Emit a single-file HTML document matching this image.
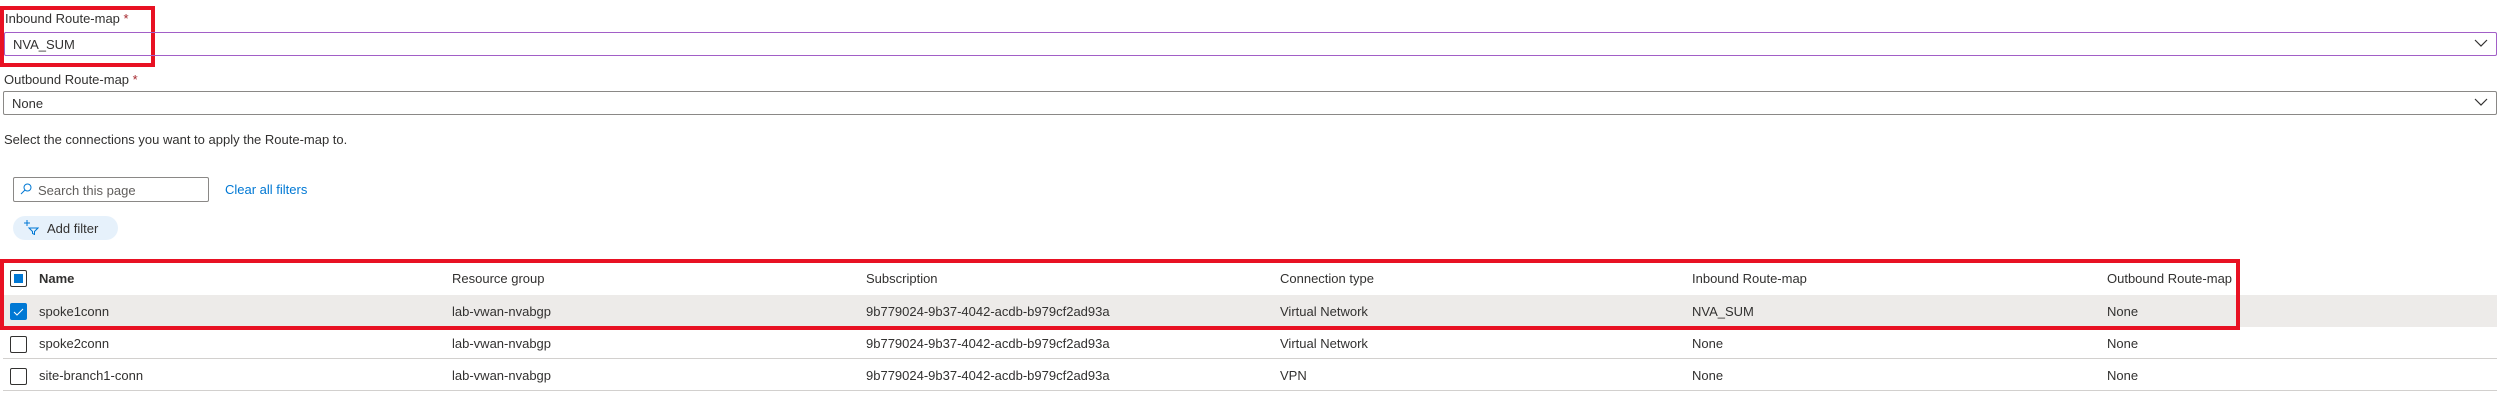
<!DOCTYPE html>
<html><head><style>
*{box-sizing:border-box;margin:0;padding:0}
body{width:2507px;height:402px;background:#fff;font-family:"Liberation Sans",sans-serif;font-size:13px;color:#323130;position:relative;overflow:hidden}
.a{position:absolute;white-space:nowrap}
.sel{position:absolute;left:3px;width:2494px;height:24px;border:1px solid #8a8886;border-radius:2px}
.sel span{position:absolute;left:8px;top:4px}
.chev{position:absolute;right:8px;top:6px}
.red{position:absolute;border:4px solid #e81123}
.cb{position:absolute;left:10px;width:17px;height:17px;border:1px solid #323130;border-radius:2px;background:#fff}
.sep{position:absolute;left:3px;width:2494px;height:1px;background:#d2d0ce}
</style></head><body>
<div class="red" style="left:0;top:6px;width:155px;height:61px"></div>
<div class="a" style="left:5px;top:11px">Inbound Route-map <span style="color:#a4262c">*</span></div>
<div class="sel" style="top:32px;border-color:#a25fc7;left:4px;width:2493px"><span>NVA_SUM</span><svg class="chev" width="14" height="9" viewBox="0 0 14 9"><path d="M1 1l6 6 6-6" fill="none" stroke="#323130" stroke-width="1.2"/></svg></div>
<div class="a" style="left:4px;top:72px">Outbound Route-map <span style="color:#a4262c">*</span></div>
<div class="sel" style="top:91px"><span>None</span><svg class="chev" width="14" height="9" viewBox="0 0 14 9"><path d="M1 1l6 6 6-6" fill="none" stroke="#323130" stroke-width="1.2"/></svg></div>
<div class="a" style="left:4px;top:132px">Select the connections you want to apply the Route-map to.</div>
<div class="a" style="left:13px;top:177px;width:196px;height:25px;border:1px solid #8a8886;border-radius:2px"><svg style="position:absolute;left:6px;top:5px" width="12" height="12" viewBox="0 0 12 12"><circle cx="7.5" cy="4.5" r="3.5" fill="none" stroke="#0078d4"/><path d="M5 7l-4 4" stroke="#0078d4"/></svg><span style="position:absolute;left:24px;top:5px;color:#605e5c">Search this page</span></div>
<div class="a" style="left:225px;top:182px;color:#0078d4">Clear all filters</div>
<div class="a" style="left:13px;top:216px;width:105px;height:24px;border-radius:12px;background:#e6f1fb"><svg style="position:absolute;left:10px;top:3px" width="16" height="16" viewBox="0 0 16 16"><path d="M4 1v6M1 4h6" stroke="#0078d4"/><path d="M6 9h9l-3.5 3.5v3l-2-1v-2z" fill="none" stroke="#0078d4"/></svg><span style="position:absolute;left:34px;top:5px">Add filter</span></div>
<div class="a" style="left:3px;top:295px;width:2494px;height:32px;background:#edebe9"></div>
<div class="red" style="left:0;top:259px;width:2240px;height:71px"></div>
<div class="cb" style="top:270px"><div style="position:absolute;left:3px;top:3px;width:9px;height:9px;background:#0078d4"></div></div>
<div class="cb" style="top:303px;background:#0078d4;border-color:#0078d4"><svg width="15" height="15" viewBox="0 0 15 15"><path d="M3 8l3 3 6-6" fill="none" stroke="#fff" stroke-width="1"/></svg></div>
<div class="cb" style="top:336px"></div>
<div class="cb" style="top:368px"></div>
<div class="sep" style="top:358px"></div>
<div class="sep" style="top:390px"></div>
<div class="a" style="top:271px;left:39px;font-weight:bold">Name</div>
<div class="a" style="top:271px;left:452px">Resource group</div>
<div class="a" style="top:271px;left:866px">Subscription</div>
<div class="a" style="top:271px;left:1280px">Connection type</div>
<div class="a" style="top:271px;left:1692px">Inbound Route-map</div>
<div class="a" style="top:271px;left:2107px">Outbound Route-map</div>
<div class="a" style="top:304px;left:39px">spoke1conn</div><div class="a" style="top:304px;left:452px">lab-vwan-nvabgp</div><div class="a" style="top:304px;left:866px">9b779024-9b37-4042-acdb-b979cf2ad93a</div><div class="a" style="top:304px;left:1280px">Virtual Network</div><div class="a" style="top:304px;left:1692px">NVA_SUM</div><div class="a" style="top:304px;left:2107px">None</div>
<div class="a" style="top:336px;left:39px">spoke2conn</div><div class="a" style="top:336px;left:452px">lab-vwan-nvabgp</div><div class="a" style="top:336px;left:866px">9b779024-9b37-4042-acdb-b979cf2ad93a</div><div class="a" style="top:336px;left:1280px">Virtual Network</div><div class="a" style="top:336px;left:1692px">None</div><div class="a" style="top:336px;left:2107px">None</div>
<div class="a" style="top:368px;left:39px">site-branch1-conn</div><div class="a" style="top:368px;left:452px">lab-vwan-nvabgp</div><div class="a" style="top:368px;left:866px">9b779024-9b37-4042-acdb-b979cf2ad93a</div><div class="a" style="top:368px;left:1280px">VPN</div><div class="a" style="top:368px;left:1692px">None</div><div class="a" style="top:368px;left:2107px">None</div>
</body></html>
